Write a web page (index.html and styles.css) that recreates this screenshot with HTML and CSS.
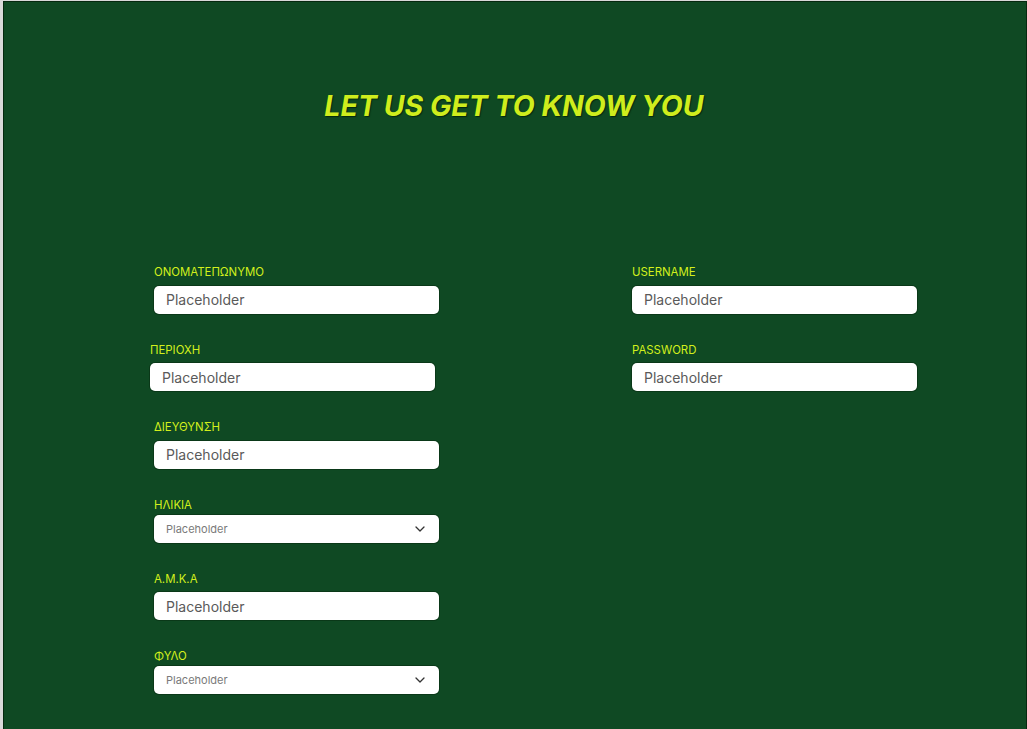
FILE: index.html
```html
<!DOCTYPE html>
<html lang="el">
<head>
<meta charset="utf-8">
<title>Let us get to know you</title>
<link rel="stylesheet" href="styles.css">
</head>
<body>
<main class="frame">
  <h1 class="title">LET US GET TO KNOW YOU</h1>
  <form class="form">
    <div class="col">
      <div class="field">
        <label class="label">ΟΝΟΜΑΤΕΠΩΝΥΜΟ</label>
        <input class="input" type="text" placeholder="Placeholder">
      </div>
      <div class="field shift">
        <label class="label">ΠΕΡΙΟΧΗ</label>
        <input class="input" type="text" placeholder="Placeholder">
      </div>
      <div class="field">
        <label class="label">ΔΙΕΥΘΥΝΣΗ</label>
        <input class="input" type="text" placeholder="Placeholder">
      </div>
      <div class="field sel">
        <label class="label">ΗΛΙΚΙΑ</label>
        <div class="select">
          <span>Placeholder</span>
          <svg class="chev" width="10" height="6" viewBox="0 0 10 6"><path d="M1 1 L5 5 L9 1" fill="none" stroke="#333" stroke-width="1.3" stroke-linecap="round" stroke-linejoin="round"/></svg>
        </div>
      </div>
      <div class="field">
        <label class="label">Α.Μ.Κ.Α</label>
        <input class="input" type="text" placeholder="Placeholder">
      </div>
      <div class="field sel">
        <label class="label">ΦΥΛΟ</label>
        <div class="select">
          <span>Placeholder</span>
          <svg class="chev" width="10" height="6" viewBox="0 0 10 6"><path d="M1 1 L5 5 L9 1" fill="none" stroke="#333" stroke-width="1.3" stroke-linecap="round" stroke-linejoin="round"/></svg>
        </div>
      </div>
    </div>
    <div class="col">
      <div class="field">
        <label class="label">USERNAME</label>
        <input class="input" type="text" placeholder="Placeholder">
      </div>
      <div class="field">
        <label class="label">PASSWORD</label>
        <input class="input" type="password" placeholder="Placeholder">
      </div>
    </div>
  </form>
</main>
</body>
</html>
```
FILE: styles.css
```css
html, body {
  margin: 0;
  padding: 0;
  background: #d9d9d9;
  height: 100%;
  overflow: hidden;
}
body {
  font-family: Inter, "Noto Sans", "DejaVu Sans", sans-serif;
}
.frame {
  margin: 1px 0 0 3px;
  border: 1px solid #06290f;
  border-bottom: none;
  background: #0f4923;
  height: 740px;
  box-sizing: border-box;
}
.title {
  margin: 0;
  padding-top: 84px;
  text-align: center;
  font-family: Inter, sans-serif;
  font-style: italic;
  font-weight: 700;
  font-size: 28.5px;
  line-height: 40px;
  color: #cfed1d;
  text-shadow: 1px 1px 1px #052a0d;
  letter-spacing: 0;
  padding-right: 2px;
}
.form {
  display: grid;
  grid-template-columns: 285px 285px;
  column-gap: 193px;
  padding: 138px 0 0 150px;
  align-items: start;
}
.col {
  display: flex;
  flex-direction: column;
  gap: 28px;
}
.field {
  display: flex;
  flex-direction: column;
}
.field.shift {
  margin-left: -4px;
  margin-right: 4px;
}
.label {
  font-size: 11.4px;
  line-height: 14px;
  color: #d3f01c;
  padding-top: 1px;
  margin-bottom: 6.5px;
  letter-spacing: 0;
}
.sel .label {
  margin-bottom: 3px;
}
.input {
  box-sizing: border-box;
  width: 285px;
  height: 28px;
  border: none;
  box-shadow: 0 0 0 1px #0a3818;
  border-radius: 5px;
  background: #fff;
  font-family: Inter, sans-serif;
  font-size: 14px;
  padding: 0 12px;
  color: #333;
  outline: none;
}
.input::placeholder {
  color: #5a5a5a;
}
.select {
  box-sizing: border-box;
  width: 285px;
  height: 28px;
  box-shadow: 0 0 0 1px #0a3818;
  border-radius: 5px;
  background: #fff;
  display: flex;
  align-items: center;
  justify-content: space-between;
  padding: 0 14px 0 12px;
  font-size: 11px;
  color: #7a7a7a;
}
.chev {
  display: block;
}
```
